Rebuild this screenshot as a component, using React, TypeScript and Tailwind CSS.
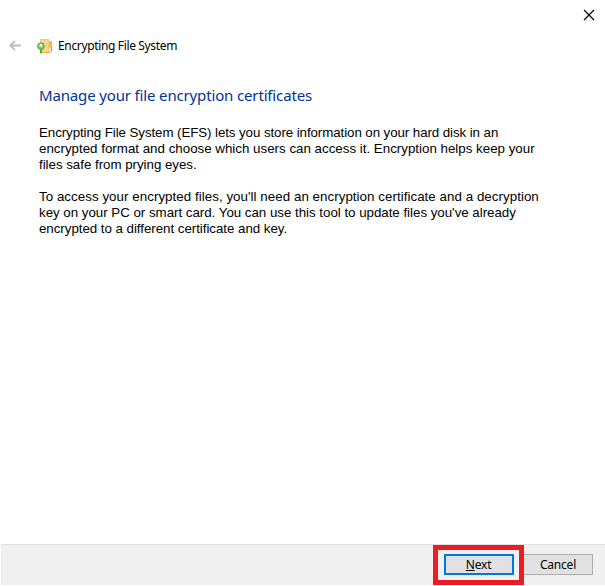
import type { ReactNode } from "react";

const INTRO = [
  { text: "Encrypting File System (EFS) lets you store information on your hard disk in an", tracking: "tracking-[-0.085px]" },
  { text: "encrypted format and choose which users can access it. Encryption helps keep your", tracking: "tracking-[0px]" },
  { text: "files safe from prying eyes.", tracking: "tracking-[-0.03px]" }
];

const DETAILS = [
  { text: "To access your encrypted files, you'll need an encryption certificate and a decryption", tracking: "tracking-[0.045px]" },
  { text: "key on your PC or smart card. You can use this tool to update files you've already", tracking: "tracking-[-0.025px]" },
  { text: "encrypted to a different certificate and key.", tracking: "tracking-[-0.04px]" }
];

type Line = { text: string; tracking: string };

function Paragraph({ lines }: { lines: Line[] }) {
  return (
    <p className="whitespace-nowrap font-['Liberation_Sans',Arial,sans-serif] text-[13.33px] leading-4 text-black">
      {lines.map((line) => (
        <span className={`block ${line.tracking}`} key={line.text}>
          {line.text}
        </span>
      ))}
    </p>
  );
}

function FolderKeyIcon() {
  return (
    <svg aria-hidden="true" className="block h-4 w-4" viewBox="0 0 16 16">
      <path d="M3 1h9v14H3z" fill="#f5cc70" />
      <path d="M4 2h7v12H4z" fill="#f8d584" />
      <path d="M12 3h2l1 1v10l-3 1z" fill="#eab94f" />
      <path d="M3 14h9v1H3z" fill="#dfaa45" />
      <path d="M12.5 9.5 14.5 9v4.5l-2 .5z" fill="#eef6fb" />
      <path d="M14 9h1v4h-1z" fill="#58aee3" />
      <circle cx="3.9" cy="8.2" r="3.3" fill="#8bce76" stroke="#45a345" />
      <circle cx="3.9" cy="7.3" r="1.2" fill="#fff" />
      <path d="M3 10.5h2V15l-1 .9-1-.9z" fill="#4fae4d" />
    </svg>
  );
}

function DialogButton({ children, primary = false }: { children: ReactNode; primary?: boolean }) {
  return (
    <button
      className={`block h-[21px] w-[70px] bg-[#e1e1e1] text-[12px] leading-none tracking-[-0.2px] text-black ${
        primary ? "border-2 border-[#0078d7]" : "border border-[#adadad]"
      }`}
      type="button"
    >
      {children}
    </button>
  );
}

export default function App() {
  return (
    <main className="flex h-[586px] w-[605px] flex-col overflow-hidden bg-white pb-px pl-px font-['Noto_Sans','Open_Sans',sans-serif]">
      <div className="flex h-[30px] shrink-0 justify-end pr-[10px] pt-[9px]">
        <button aria-label="Close" className="h-3 w-3" type="button">
          <svg className="block" width="12" height="12" viewBox="0 0 12 12">
            <path d="m1 1 10 10m0-10-10 10" stroke="#000" strokeWidth="1.2" fill="none" />
          </svg>
        </button>
      </div>

      <header className="flex h-8 shrink-0 items-center pl-2">
        <button aria-label="Back" className="h-3 w-3" type="button">
          <svg className="block" width="12" height="12" viewBox="0 0 12 12">
            <path d="M12 5.5H1M6 .8 1.2 5.5 6 10.2" stroke="#bdbdbd" strokeWidth="1.8" fill="none" />
          </svg>
        </button>
        <div className="ml-4">
          <FolderKeyIcon />
        </div>
        <span className="ml-[5px] text-[12px] tracking-[-0.35px] text-black">Encrypting File System</span>
      </header>

      <section className="flex grow flex-col pl-[38px] pt-[23px]">
        <h1 className="mb-5 h-5 whitespace-nowrap text-[15px] leading-5 tracking-[-0.15px] text-[#003399]">
          Manage your file encryption certificates
        </h1>
        <div className="flex flex-col gap-4">
          <Paragraph lines={INTRO} />
          <Paragraph lines={DETAILS} />
        </div>
      </section>

      <footer className="flex h-[41px] shrink-0 items-start justify-end border-t border-[#dfdfdf] bg-[#f0f0f0] pr-3">
        <div className="z-10 flex h-10 w-[91px] items-start justify-center border-[5px] border-[#ed1c24] pt-1">
          <DialogButton primary>
            <u>N</u>ext
          </DialogButton>
        </div>
        <div className="-ml-px pt-[9px]">
          <DialogButton>Cancel</DialogButton>
        </div>
      </footer>
    </main>
  );
}
